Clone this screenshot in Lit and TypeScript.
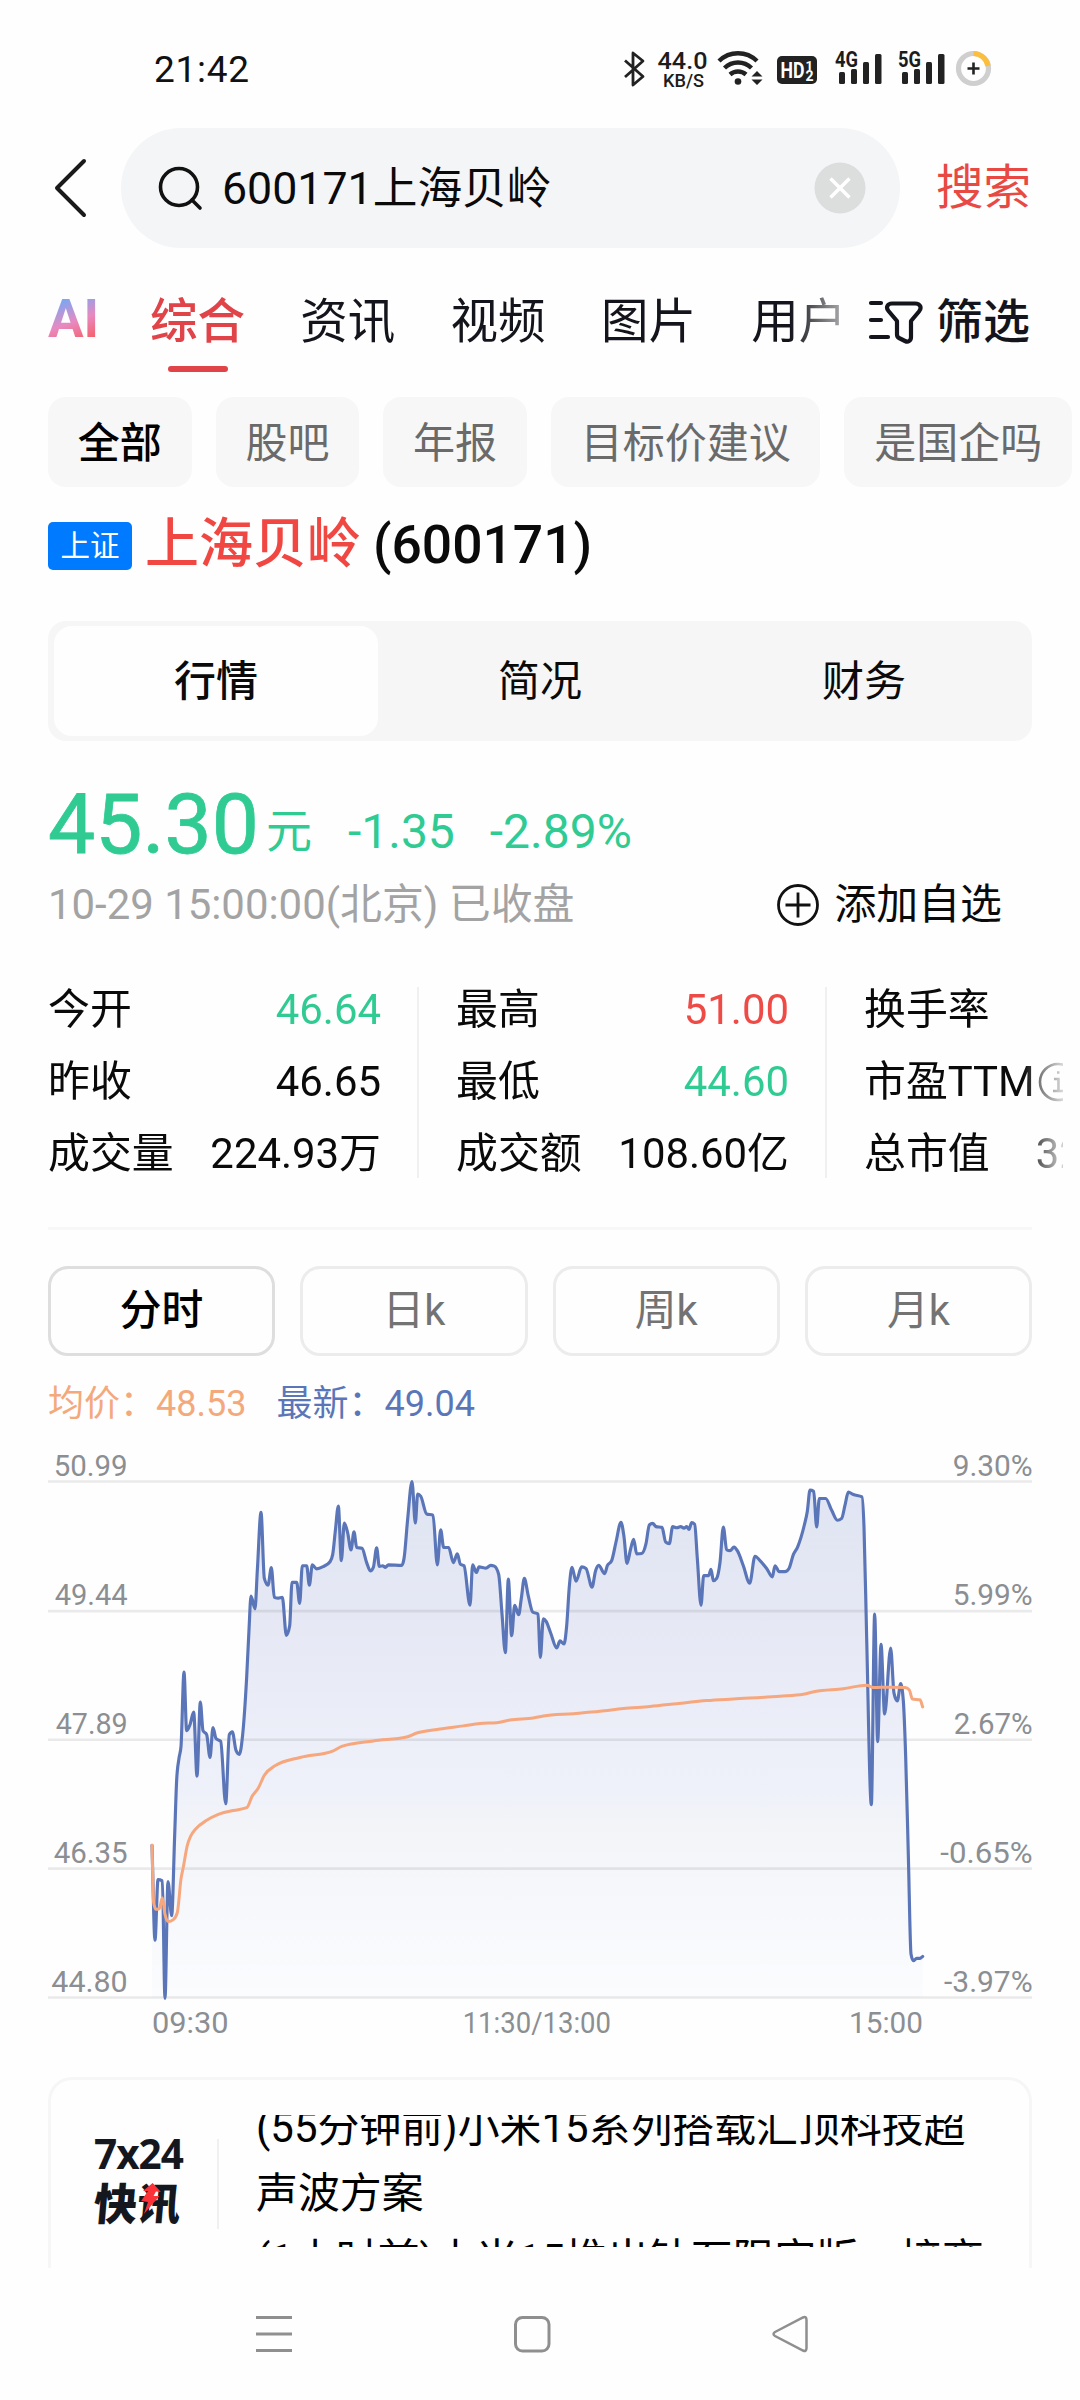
import { LitElement, html, css, svg } from "lit";
import { customElement } from "lit/decorators.js";
import { classMap } from "lit/directives/class-map.js";

type Pt = [number, number];

/** Vertical units of the samples per unit of the chart's view box. */
const SY = 1.1862;

/** Expands a flat x,y list into points, moved right by dx. */
function pts(dx: number, flat: number[]): Pt[] {
  const out: Pt[] = [];
  for (let i = 0; i < flat.length; i += 2) out.push([flat[i] + dx, flat[i + 1] * SY]);
  return out;
}

/** Monotone cubic interpolation, so peaks never overshoot their samples. */
function smooth(p: Pt[]): string {
  const n = p.length;
  const slope = (i: number) => (p[i + 1][1] - p[i][1]) / (p[i + 1][0] - p[i][0]);
  const m: number[] = [];
  for (let i = 0; i < n; i++) {
    if (i === 0) m.push(slope(0));
    else if (i === n - 1) m.push(slope(n - 2));
    else {
      const a = slope(i - 1);
      const b = slope(i);
      const h0 = p[i][0] - p[i - 1][0];
      const h1 = p[i + 1][0] - p[i][0];
      const s = (a * h1 + b * h0) / (h0 + h1);
      m.push(
        (Math.sign(a) + Math.sign(b)) * Math.min(Math.abs(a), Math.abs(b), 0.5 * Math.abs(s)) || 0,
      );
    }
  }
  const f = (v: number) => v.toFixed(1);
  let d = `M${f(p[0][0])},${f(p[0][1])}`;
  for (let i = 0; i < n - 1; i++) {
    const h = (p[i + 1][0] - p[i][0]) / 3;
    d += `C${f(p[i][0] + h)},${f(p[i][1] + m[i] * h)} ${f(p[i + 1][0] - h)},${f(p[i + 1][1] - m[i + 1] * h)} ${f(p[i + 1][0])},${f(p[i + 1][1])}`;
  }
  return d;
}

const PRICE: Pt[] = [
  ...pts(90, [
    366, 1025, 375, 1265, 384, 1112, 397, 1115, 405, 1412, 414, 1117, 425, 1203, 434, 1000, 440, 860,
    447, 805, 453, 775, 462, 587, 470, 735, 480, 720, 491, 688, 501, 850, 511, 663, 519, 735, 530,
    745, 540, 803, 549, 727, 558, 755, 572, 762, 587, 920, 598, 745, 607, 738, 618, 785, 628, 795,
    638, 745, 650, 600, 657, 480, 663, 395, 675, 427, 682, 330, 693, 183, 703, 350, 714, 367, 724,
    323, 733, 398, 745, 400, 757, 398, 769, 494, 779, 470, 786, 360, 800, 360, 809, 413, 817, 318,
    830, 318, 838, 367, 847, 316, 860, 326, 880, 320, 900, 308, 908, 290, 916, 230, 925, 167, 934,
    305, 943, 210, 953, 235, 963, 278, 972, 232, 980, 272, 996, 274, 1010, 310, 1021, 331, 1030,
    322, 1040, 273, 1048, 320, 1058, 318, 1066, 322, 1075, 316, 1115, 317, 1122, 300, 1133, 200,
    1146, 105, 1156, 210, 1163, 137, 1172, 142, 1190, 187, 1209, 190, 1222, 316, 1232, 227, 1241,
    272, 1256, 272, 1270, 310, 1282, 288, 1291, 314, 1302, 318, 1320, 418, 1328, 316,
  ]),
  ...pts(1200, [
    229, 335, 237, 321, 258, 324, 272, 317, 283, 319, 296, 340, 306, 440, 316, 538, 325, 352, 335,
    495, 344, 418, 356, 442, 364, 400, 373, 350, 385, 395, 398, 435, 414, 440, 421, 550, 430, 452,
    438, 458, 452, 488, 470, 526, 480, 508, 492, 516, 500, 470, 508, 370, 516, 322, 528, 357, 545,
    321, 558, 325, 576, 372, 587, 330, 596, 317, 614, 338, 622, 318, 635, 305, 648, 258, 663, 208,
    672, 245, 681, 312, 692, 275, 701, 251, 710, 288, 725, 287, 738, 262, 748, 215, 758, 211, 768,
    219, 786, 221, 797, 258, 808, 262, 818, 219, 830, 222, 842, 219, 852, 223, 860, 219, 867, 226,
    875, 209, 884, 213, 892, 300, 903, 418, 911, 343, 926, 343, 933, 327, 940, 356, 950, 350, 960,
    310, 970, 220, 980, 278, 990, 280, 1002, 271, 1012, 280, 1030, 318, 1049, 362, 1065, 294, 1080,
    305, 1100, 325, 1117, 346, 1125, 318,
  ]),
  ...pts(2100, [
    238, 333, 255, 333, 267, 325, 280, 290, 293, 270, 313, 215, 322, 180, 330, 127, 341, 130, 350,
    220, 358, 148, 377, 148, 395, 178, 412, 203, 425, 198, 435, 165, 445, 132, 460, 138, 486, 144,
    492, 220, 500, 500, 514, 922, 524, 440, 533, 763, 543, 517, 554, 693, 572, 526, 582, 640, 592,
    660, 602, 616, 610, 660, 617, 800, 625, 1050, 633, 1300, 640, 1317, 650, 1311, 660, 1311, 668,
    1306,
  ]),
];

const AVERAGE: Pt[] = [
  ...pts(90, [
    366, 1025, 371, 1170, 378, 1187, 388, 1185, 397, 1158, 405, 1200, 415, 1218, 430, 1213, 442,
    1195, 453, 1110, 460, 1080, 472, 1025, 482, 1002, 497, 984, 530, 962, 565, 947, 610, 937, 650,
    930, 667, 900, 685, 880, 703, 848, 735, 824, 810, 803, 910, 786, 935, 775, 1030, 761, 1130, 751,
    1160, 741, 1230, 731, 1300, 723,
  ]),
  ...pts(1200, [
    240, 717, 290, 715, 330, 708, 400, 703, 430, 698, 520, 692, 600, 686, 670, 679, 750, 674, 830,
    667, 920, 659, 1000, 655,
  ]),
  ...pts(2100, [
    240, 648, 310, 643, 345, 636, 430, 629, 500, 620, 520, 626, 570, 625, 615, 626, 628, 632, 637,
    655, 660, 657, 668, 675,
  ]),
];

const GRID = [
  { y: 105, price: "50.99", pw: 222, pct: "9.30%", cw: 240 },
  { y: 433, price: "49.44", pw: 219, pct: "5.99%", cw: 240 },
  { y: 758, price: "47.89", pw: 216, pct: "2.67%", cw: 237 },
  { y: 1084, price: "46.35", pw: 222, pct: "-0.65%", cw: 277 },
  { y: 1410, price: "44.80", pw: 229, pct: "-3.97%", cw: 266 },
];

@customElement("minute-chart")
export class MinuteChart extends LitElement {
  static styles = css`
    :host {
      display: block;
      height: 620px;
    }
    svg {
      display: block;
    }
    text {
      font: 400 87px Roboto, "Liberation Sans", sans-serif;
      fill: #8b8e92;
    }
    .grid {
      stroke: #000;
      stroke-opacity: 0.08;
      stroke-width: 8;
    }
    .price {
      fill: none;
      stroke: #5b76b8;
      stroke-width: 9.5;
      stroke-linejoin: round;
      stroke-linecap: round;
    }
    .avg {
      fill: none;
      stroke: #f6a77d;
      stroke-width: 9;
      stroke-linejoin: round;
      stroke-linecap: round;
    }
  `;

  render() {
    const line = smooth(PRICE);
    const last = PRICE[PRICE.length - 1][0];
    const fit = "spacingAndGlyphs";
    return html`<svg width="1080" height="620" viewBox="0 0 3240 1860">
      <defs>
        <linearGradient id="fill" x1="0" y1="125" x2="0" y2="1673" gradientUnits="userSpaceOnUse">
          <stop offset="0" stop-color="#e0e5f3"></stop>
          <stop offset="0.25" stop-color="#e5e8f4"></stop>
          <stop offset="0.6" stop-color="#eff1fa"></stop>
          <stop offset="0.66" stop-color="#f3f4f8"></stop>
          <stop offset="1" stop-color="#fbfcfe"></stop>
        </linearGradient>
      </defs>
      <path d="${line}L${last},1673L456,1673Z" fill="url(#fill)"></path>
      ${GRID.map(
        (g) => svg`
          <line class="grid" x1="144" x2="3096" y1=${g.y * SY} y2=${g.y * SY}></line>
          <text x=${383 - g.pw} y=${(g.y - 15) * SY} textLength=${g.pw} lengthAdjust=${fit}>${g.price}</text>
          <text x=${3098 - g.cw} y=${(g.y - 15) * SY} textLength=${g.cw} lengthAdjust=${fit}>${g.pct}</text>`,
      )}
      <path class="price" d=${line}></path>
      <path class="avg" d=${smooth(AVERAGE)}></path>
      <text x="456" y="1779" textLength="230" lengthAdjust=${fit}>09:30</text>
      <text x="1388" y="1779" textLength="445" lengthAdjust=${fit}>11:30/13:00</text>
      <text x="2547" y="1779" textLength="222" lengthAdjust=${fit}>15:00</text>
    </svg>`;
  }
}

@customElement("status-bar")
export class StatusBar extends LitElement {
  static styles = css`
    :host {
      display: flex;
      align-items: center;
      justify-content: space-between;
      height: 115px;
      padding: 13px 80px 0 154px;
      font-family: Roboto, "Noto Sans CJK SC", sans-serif;
    }
    .time {
      font-size: 37px;
      line-height: 50px;
      letter-spacing: 0.7px;
      color: #111;
    }
    text {
      font-family: Roboto, sans-serif;
      font-weight: 500;
      fill: #1c1c1c;
    }
    .net {
      font-weight: 700;
    }
    .hd {
      fill: #fff;
      font-weight: 700;
    }
  `;

  private bars(x: number, label: string) {
    return svg`
      <text class="net" x=${x - 4} y="67" font-size="21.5" textLength="23" lengthAdjust="spacingAndGlyphs">${label}</text>
      <rect x=${x} y="72" width="6" height="12" rx="1.5"></rect>
      <rect x=${x + 12} y="69" width="6" height="15" rx="1.5"></rect>
      <rect x=${x + 24} y="62" width="6" height="22" rx="1.5"></rect>
      <rect x=${x + 36} y="54" width="6.5" height="30" rx="1.5"></rect>`;
  }

  render() {
    return html`
      <span class="time">21:42</span>
      <svg width="380" height="50" viewBox="620 45 380 50" fill="#222">
        <path
          d="M625 60.5L643 76.5L633 85V53L643 61L625 77"
          fill="none"
          stroke="#222"
          stroke-width="2.8"
          stroke-linejoin="round"
        ></path>
        <text x="657.5" y="68.500" font-size="23.500" textLength="50" lengthAdjust="spacingAndGlyphs">44.0</text>
        <text x="663" y="86.500" font-size="19" textLength="41" lengthAdjust="spacingAndGlyphs">KB/S</text>
        <g fill="none" stroke="#222" stroke-width="4.4">
          <path d="M719 61A27 27 0 0 1 757 61"></path>
          <path d="M724.5 68A19.500 19.500 0 0 1 751.500 68"></path>
          <path d="M730 74.500A12 12 0 0 1 746 74.500"></path>
        </g>
        <circle cx="738" cy="81.500" r="3.300"></circle>
        <path d="M751.500 76.500L757 71L762.500 76.500ZM751.500 79.500L757 85L762.500 79.500Z"></path>
        <rect x="777" y="56" width="40" height="28" rx="5"></rect>
        <text class="hd" x="780.500" y="78" font-size="22" textLength="24" lengthAdjust="spacingAndGlyphs">HD</text>
        <text class="hd" x="805.500" y="69.500" font-size="13">1</text>
        <text class="hd" x="805.500" y="81" font-size="14">2</text>
        ${this.bars(839, "4G")} ${this.bars(902, "5G")}
        <circle cx="973.500" cy="68.500" r="15" fill="none" stroke="#cfcfcf" stroke-width="5.200"></circle>
        <path d="M973.500 53.500A15 15 0 0 1 988 66" fill="none" stroke="#fcbe3d" stroke-width="5.200"></path>
        <path d="M967.500 68.500H979.500M973.500 62.500V74.500" stroke="#222" stroke-width="2.600"></path>
      </svg>
    `;
  }
}

const TABS = ["综合", "资讯", "视频", "图片", "用户"];
const CHIPS = ["全部", "股吧", "年报", "目标价建议", "是国企吗"];
const SECTIONS = ["行情", "简况", "财务"];
const PERIODS = ["分时", "日k", "周k", "月k"];
const STATS = [
  [
    { k: "今开", v: "46.64", c: "down" },
    { k: "昨收", v: "46.65", c: "" },
    { k: "成交量", v: "224.93万", c: "" },
  ],
  [
    { k: "最高", v: "51.00", c: "up" },
    { k: "最低", v: "44.60", c: "down" },
    { k: "成交额", v: "108.60亿", c: "" },
  ],
];

@customElement("app-root")
export class AppRoot extends LitElement {
  static styles = css`
    :host {
      display: flex;
      flex-direction: column;
      width: 1080px;
      height: 2400px;
      overflow: hidden;
      background: #fefefe;
      color: #0a0a0a;
      font-family: Roboto, "Noto Sans CJK SC", sans-serif;
      font-size: 42px;
      white-space: nowrap;
    }
    svg {
      display: block;
      flex: none;
    }
    .search {
      display: flex;
      align-items: center;
      height: 120px;
      padding-left: 50px;
    }
    .pill {
      display: flex;
      align-items: center;
      box-sizing: border-box;
      width: 779px;
      height: 120px;
      margin-left: 31px;
      padding: 0 34px 0 36px;
      border-radius: 60px;
      background: #f3f5f7;
    }
    .query {
      flex: 1;
      margin-left: 19px;
      font-size: 44.7px;
      line-height: 60px;
      padding-top: 3px;
    }
    .go {
      margin-left: 36px;
      font-size: 47.5px;
      line-height: 60px;
      color: #e84a43;
    }
    .nav {
      display: flex;
      box-sizing: border-box;
      height: 149px;
      padding: 44px 0 0 48px;
      font-size: 47.5px;
      line-height: 60px;
      color: #14151c;
    }
    .ai {
      width: 50px;
      height: 60px;
      line-height: 54px;
      font-size: 53px;
      font-weight: 700;
      color: transparent;
      background: linear-gradient(160deg, #7ea6f2 18%, #e88ac0 50%, #f5606a 80%);
      -webkit-background-clip: text;
      background-clip: text;
    }
    .tabs {
      display: flex;
      gap: 55.3px;
      width: 696px;
      margin-left: 52px;
      overflow: hidden;
      -webkit-mask-image: linear-gradient(90deg, #000 640px, transparent 722px);
      mask-image: linear-gradient(90deg, #000 640px, transparent 722px);
    }
    .tab {
      display: flex;
      flex-direction: column;
      align-items: center;
    }
    .tab.on {
      color: #e04448;
      font-weight: 500;
    }
    .tab.on::after {
      content: "";
      width: 60px;
      height: 6px;
      margin-top: 14px;
      border-radius: 3px;
      background: #e04448;
    }
    .filter {
      display: flex;
      align-items: center;
      height: 60px;
      margin-left: 21px;
      gap: 13px;
      font-size: 47px;
      font-weight: 500;
    }
    .chips {
      display: flex;
      gap: 24px;
      height: 90px;
      padding-left: 48px;
    }
    .chip {
      padding: 0 29.8px;
      border-radius: 18px;
      background: #f7f7f7;
      line-height: 94px;
      font-size: 42px;
      color: #6a6a6a;
    }
    .chip.on {
      color: #000;
      font-weight: 500;
    }
    .title {
      display: flex;
      align-items: center;
      height: 118px;
      padding: 0 48px 16px;
      font-weight: 500;
      font-size: 53.4px;
      line-height: 60px;
    }
    .badge {
      box-sizing: border-box;
      width: 84px;
      height: 48px;
      border-radius: 5px;
      background: #007aff;
      color: #fff;
      font-size: 29.5px;
      font-weight: 400;
      line-height: 49px;
      text-align: center;
    }
    .code {
      padding-bottom: 2px;
    }
    .name {
      margin: 0 12px 0 13px;
      padding-bottom: 1px;
      font-size: 54px;
      color: #f04743;
    }
    .sections {
      display: flex;
      box-sizing: border-box;
      height: 120px;
      margin: 0 48px;
      padding: 5px 6px;
      border-radius: 18px;
      background: #f6f6f6;
      line-height: 111px;
      text-align: center;
    }
    .section {
      flex: 1;
      border-radius: 18px;
    }
    .section.on {
      background: #fefefe;
      font-weight: 500;
    }
    .quote {
      display: flex;
      align-items: flex-start;
      margin-top: 33px;
      height: 100px;
      padding-left: 48px;
      line-height: 115px;
      font-size: 48px;
      color: #2fcb93;
    }
    .last {
      font-size: 84px;
      line-height: 101px;
      -webkit-text-stroke: 0.8px #2fcb93;
    }
    .unit {
      margin: 0 36px 0 7px;
      font-size: 46px;
    }
    .change {
      margin-right: 35px;
    }
    .meta {
      display: flex;
      align-items: center;
      justify-content: space-between;
      height: 60px;
      margin-top: 1px;
      padding: 0 78px 0 48px;
      font-size: 41.9px;
      line-height: 60px;
      color: #a3a3a3;
    }
    .add {
      display: flex;
      align-items: center;
      gap: 14px;
      color: #0a0a0a;
    }
    .stats {
      display: flex;
      width: 1015px;
      margin: 39px 0 0 48px;
      overflow: hidden;
      font-size: 41.9px;
      line-height: 72px;
      -webkit-mask-image: linear-gradient(90deg, #000 975px, transparent 1024px);
      mask-image: linear-gradient(90deg, #000 975px, transparent 1024px);
    }
    .col {
      flex: none;
      width: 333px;
    }
    .sep {
      flex: none;
      width: 2px;
      height: 191px;
      margin: 13px 37px 13px 36px;
      background: #f0f0f0;
    }
    .row {
      display: flex;
      justify-content: space-between;
      align-items: center;
      height: 72px;
    }
    .row.tight {
      justify-content: flex-start;
      gap: 3px;
    }
    .row.wide {
      justify-content: flex-start;
      gap: 46px;
    }
    .up {
      color: #ee4a46;
    }
    .down {
      color: #2fcb93;
    }
    .rule {
      height: 3px;
      margin: 37px 48px 0;
      background: #f7f7f7;
    }
    .periods {
      display: flex;
      gap: 25px;
      height: 90px;
      margin: 36px 48px 0;
      font-size: 41.8px;
      line-height: 84px;
      text-align: center;
      color: #737373;
    }
    .period {
      box-sizing: border-box;
      flex: 1;
      border: 3px solid #ececec;
      border-radius: 20px;
    }
    .period.on {
      border-color: #dedede;
      color: #000;
      font-weight: 500;
    }
    .legend {
      display: flex;
      gap: 30px;
      margin: 18px 0 6px 48px;
      font-size: 36px;
      line-height: 60px;
    }
    .lavg {
      color: #f3a97c;
    }
    .lnew {
      color: #5b76b8;
    }
    .news {
      display: flex;
      box-sizing: border-box;
      height: 191px;
      margin: 17px 48px 0;
      border: 3px solid #f6f6f6;
      border-bottom: 0;
      border-radius: 24px 24px 0 0;
    }
    .brand {
      width: 88px;
      margin: 46px 0 0 43px;
      color: #15171f;
    }
    .b1 {
      font: 700 40.5px/56px "Open Sans", sans-serif;
      letter-spacing: -1px;
    }
    .b2 {
      position: relative;
      margin-top: -5px;
      font: 900 43.5px/50px "Noto Sans CJK SC", sans-serif;
      transform: skewX(-5deg);
    }
    .bolt {
      position: absolute;
      left: 47px;
      top: 6px;
    }
    .bar {
      width: 2px;
      height: 90px;
      margin: 59px 37px 0 35px;
      background: #f0f0f0;
    }
    .feed {
      height: 132px;
      margin-top: 35px;
      overflow: hidden;
      font-size: 41.9px;
      line-height: 66px;
      color: #000;
    }
    .lines {
      margin-top: -20px;
    }
  `;

  render() {
    return html`
      <status-bar></status-bar>
      <div class="search">
        <svg width="40" height="64" viewBox="50 156 40 64" fill="none" stroke="#1a1a1a" stroke-width="4">
          <path d="M84 161L57 188L84 215" stroke-linecap="round" stroke-linejoin="round"></path>
        </svg>
        <div class="pill">
          <svg width="46" height="46" viewBox="0 0 46 46" fill="none" stroke="#111" stroke-width="3.6">
            <circle cx="22" cy="22" r="18.500"></circle>
            <path d="M35 35L43 43" stroke-linecap="round"></path>
          </svg>
          <span class="query">600171上海贝岭</span>
          <svg width="52" height="52" viewBox="0 0 52 52">
            <circle cx="26" cy="26" r="25.500" fill="#dcdddd"></circle>
            <path d="M16.500 16.500L35.500 35.500M35.500 16.500L16.500 35.500" stroke="#fff" stroke-width="3.500"></path>
          </svg>
        </div>
        <span class="go">搜索</span>
      </div>
      <div class="nav">
        <span class="ai">AI</span>
        <div class="tabs">
          ${TABS.map((t, i) => html`<span class=${classMap({ tab: true, on: i === 0 })}>${t}</span>`)}
        </div>
        <div class="filter">
          <svg width="56" height="46" viewBox="867 298 56 46" fill="none" stroke="#14151c" stroke-width="4.200">
            <path d="M871 302H881M871 319H881M871 336H888" stroke-linecap="round"></path>
            <path
              d="M892 302.500H915C920.500 302.500 922 307 919 310.500L911 320V336C911 340 908 341.500 905 340L899 337Q897 336 897 333.500V320L888.500 310C885.500 306.500 887.500 302.500 892 302.500Z"
              stroke-linejoin="round"
            ></path>
          </svg>
          <span>筛选</span>
        </div>
      </div>
      <div class="chips">
        ${CHIPS.map((t, i) => html`<span class=${classMap({ chip: true, on: i === 0 })}>${t}</span>`)}
      </div>
      <div class="title">
        <span class="badge">上证</span>
        <span class="name">上海贝岭</span>
        <span class="code">(600171)</span>
      </div>
      <div class="sections">
        ${SECTIONS.map((t, i) => html`<span class=${classMap({ section: true, on: i === 0 })}>${t}</span>`)}
      </div>
      <div class="quote">
        <span class="last">45.30</span>
        <span class="unit">元</span>
        <span class="change">-1.35</span>
        <span>-2.89%</span>
      </div>
      <div class="meta">
        <span>10-29 15:00:00(北京) 已收盘</span>
        <span class="add">
          <svg width="44" height="44" viewBox="0 0 44 44" fill="none" stroke="#111" stroke-width="2.800">
            <circle cx="22" cy="22" r="19.500"></circle>
            <path d="M9.500 22H34.500M22 9.500V34.500"></path>
          </svg>
          <span>添加自选</span>
        </span>
      </div>
      <div class="stats">
        ${STATS.map(
          (col) => html`
            <div class="col">
              ${col.map((r) => html`<div class="row"><span>${r.k}</span><span class=${r.c}>${r.v}</span></div>`)}
            </div>
            <div class="sep"></div>
          `,
        )}
        <div class="col">
          <div class="row"><span>换手率</span></div>
          <div class="row tight">
            <span>市盈TTM</span>
            <svg width="40" height="40" viewBox="0 0 40 40" fill="none" stroke="#333" stroke-width="2.600">
              <circle cx="20" cy="20" r="18"></circle>
              <path d="M16 17H20.500V29M15 29H26M19 10.500H21.500"></path>
            </svg>
          </div>
          <div class="row wide"><span>总市值</span><span>32</span></div>
        </div>
      </div>
      <div class="rule"></div>
      <div class="periods">
        ${PERIODS.map((t, i) => html`<span class=${classMap({ period: true, on: i === 0 })}>${t}</span>`)}
      </div>
      <div class="legend">
        <span class="lavg">均价：48.53</span>
        <span class="lnew">最新：49.04</span>
      </div>
      <minute-chart></minute-chart>
      <div class="news">
        <div class="brand">
          <div class="b1">7x24</div>
          <div class="b2">
            快讯
            <svg class="bolt" width="20" height="32" viewBox="0 0 20 32" fill="#fb3238">
              <path d="M10 0L19 9L14 8.500L12 13L18 13L4 31L7 19L0 18L6 8L1 8Z"></path>
            </svg>
          </div>
        </div>
        <div class="bar"></div>
        <div class="feed">
          <div class="lines">
            <div>(55分钟前)小米15系列搭载汇顶科技超</div>
            <div>声波方案</div>
            <div>(1小时前)小米15推出钻石限定版，接商</div>
          </div>
        </div>
      </div>
      <svg width="1080" height="132" viewBox="0 2268 1080 132" fill="none" stroke="#8f8f8f" stroke-width="3">
        <path d="M256 2317.500H292M256 2334H292M256 2350.500H292"></path>
        <rect x="515.500" y="2317.500" width="33.500" height="33.500" rx="7"></rect>
        <path
          d="M775 2332L803 2317.500Q806.500 2316 806.500 2320V2348Q806.500 2352 803 2350.500L775 2336Q772 2334 775 2332Z"
          stroke-width="2.500"
        ></path>
      </svg>
    `;
  }
}
